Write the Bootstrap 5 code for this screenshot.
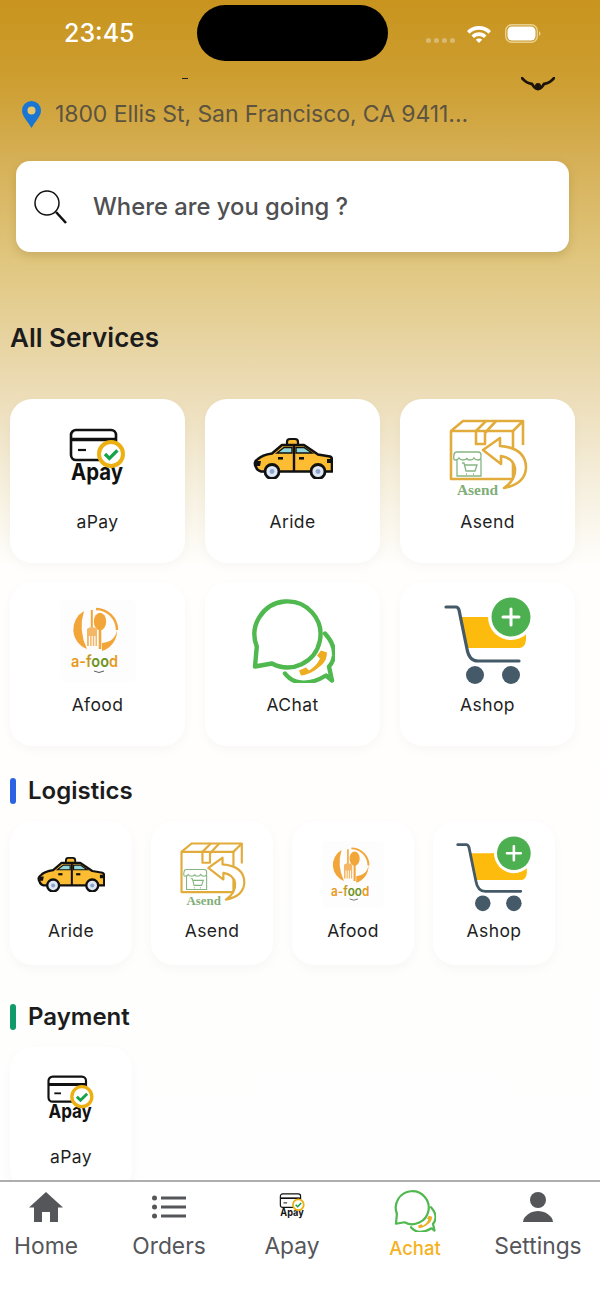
<!DOCTYPE html>
<html lang="en">
<head>
    <meta charset="utf-8">
    <meta name="viewport" content="width=device-width, initial-scale=1">
    <title>All Services</title>
    <link href="https://cdn.jsdelivr.net/npm/bootstrap@5.3.3/dist/css/bootstrap.min.css" rel="stylesheet"/>
    <style>
        html, body { height: 100%; overflow: hidden; }
        body { font-family: Inter, "Liberation Sans", sans-serif; background: #fff; }

        .app-shell { height: 1299px; width: 600px; }
        .scroll-top {
            height: 1180px;
            overflow: hidden;
            background: linear-gradient(180deg, #c8941e 0, #cd9e30 80px, #d6b057 160px, #e0c67e 260px, #ecdcb6 390px, #f5eedb 480px, #fffefc 565px, #fefefe 100%);
        }

        .status-row { height: 76px; padding: 5px 0 0 64px; }
        .status-time { width: 133px; height: 56px; line-height: 57px; color: #fff; font-size: 25px; font-weight: 500; }
        .island { width: 191px; height: 56px; border-radius: 28px; background: #000; }
        .signal-dots { gap: 3px; margin: 33px 12px 0 38px; }
        .signal-dots i { width: 5px; height: 5px; border-radius: 50%; background: #d8ba72; }
        .status-icons { height: 56px; gap: 14px; }

        .peek-row { height: 16px; }
        .peek-dash { width: 6px; height: 1px; background: #222; margin: 2px 0 0 182px; }
        .peek-bell { margin: 1px 45px 0 auto; }

        .address-row { height: 44px; padding: 1px 0 0 22px; gap: 14px; }
        .address-text { color: #5c5340; font-size: 23px; letter-spacing: -.08px; white-space: nowrap; }

        .search-box {
            height: 91px;
            margin: 25px 31px 0 16px;
            padding: 1px 0 0 17px;
            gap: 25px;
            border-radius: 14px;
            box-shadow: 0 4px 10px rgba(120, 90, 20, .22);
        }
        .search-text { color: #4f5052; font-size: 23.8px; font-weight: 500; }

        .all-title { margin: 69px 0 0 10px; height: 34px; line-height: 34px; color: #1c1c1c; font-size: 26px; font-weight: 600; }
        .big-grid { display: grid; grid-template-columns: repeat(3, 175px); gap: 19px 20px; margin: 44px 0 0 10px; }
        .small-row { gap: 19px; margin: 13px 0 0 10px; }

        .tile { border: 0; border-radius: 22px; background: #fff; box-shadow: 0 4px 12px rgba(0, 0, 0, .03); }
        .tile-big { height: 164px; }
        .tile-small { width: 122px; height: 144px; }
        .tile-art { display: flex; align-items: center; justify-content: center; }
        .tile-big .tile-art { height: 113px; padding-top: 4px; }
        .tile-small .tile-art { height: 100px; padding-top: 6px; }
        .tile-name { height: 20px; line-height: 20px; text-align: center; color: #1f1f1f; font-size: 17.5px; letter-spacing: .4px; }

        .group-head { height: 34px; gap: 12px; margin-left: 10px; }
        .group-bar { width: 6px; height: 26px; border-radius: 3px; }
        .bar-blue { background: #2b63e3; }
        .bar-green { background: #119a6b; }
        .group-title { color: #1c1c1c; font-size: 24px; font-weight: 560; }
        .head-logistics { margin-top: 28px; }
        .head-payment { margin-top: 35px; }

        .tab-strip {
            display: grid;
            grid-template-columns: repeat(5, 123px);
            width: 615px;
            margin-left: -15.5px;
            height: 119px;
            border-top: 2px solid #aeaeae;
            background: #fff;
        }
        .tab-cell { display: flex; flex-direction: column; align-items: center; }
        .tab-art { height: 49px; display: flex; align-items: center; justify-content: center; }
        .tab-art-low { padding-top: 8px; }
        .tab-label { color: #55565a; font-size: 22.8px; line-height: 28px; margin-top: 1px; white-space: nowrap; }
        .tab-active { color: #f5b21f; font-size: 18.5px; font-weight: 500; margin-top: 3px; }
    </style>
</head>
<body>

<svg width="0" height="0" class="d-block position-absolute">
    <defs>
        <symbol id="ic-apay" viewBox="0 0 60 60">
            <rect x="3" y="2" width="45" height="30" rx="5" fill="#fff" stroke="#111" stroke-width="2.6"/>
            <path d="M3 11.5H48" stroke="#111" stroke-width="3.6"/>
            <path d="M10 22H18" stroke="#111" stroke-width="2.2"/>
            <text x="3" y="52" font-family="Inter, sans-serif" font-size="23" font-weight="700" fill="#111" textLength="52" lengthAdjust="spacingAndGlyphs">Apay</text>
            <circle cx="43" cy="26" r="12" fill="#fff" stroke="#edb013" stroke-width="4"/>
            <path d="M37 26l4.4 4.4 8-8" fill="none" stroke="#17a34a" stroke-width="3.4"/>
        </symbol>

        <symbol id="ic-taxi" viewBox="0 -2 80 42">
            <path d="M34 7V3q0-3 3-3h5q3 0 3 3v4z" fill="#fdbd33" stroke="#111" stroke-width="2.2"/>
            <path d="M3 28q-3-5 2-8 4-4 14-5.500L29 6h22l14 9.500 12 2q2 1 2 3v12H8q-4-1-5-4.500z" fill="#fdbd33" stroke="#111" stroke-width="2.600" stroke-linejoin="round"/>
            <path d="M24 14L31 8.500h8V14zM43 8.500h8L59 14H43z" fill="#8fd6da" stroke="#111" stroke-width="1.400"/>
            <path d="M41 6V32" stroke="#111" stroke-width="2.400"/>
            <path d="M3 22h5l-1 5H3zM78 20h-4v4h4z" fill="#111"/>
            <rect x="25" y="18" width="5" height="2.600" fill="#111"/>
            <rect x="46" y="18" width="5" height="2.600" fill="#111"/>
            <circle cx="19" cy="32.500" r="7" fill="#dfe7f5" stroke="#111" stroke-width="2.800"/>
            <circle cx="19" cy="32.500" r="2.400" fill="#8fa6cc"/>
            <circle cx="65" cy="32.500" r="7" fill="#dfe7f5" stroke="#111" stroke-width="2.800"/>
            <circle cx="65" cy="32.500" r="2.400" fill="#8fa6cc"/>
        </symbol>

        <symbol id="ic-asend" viewBox="0 0 80 80">
            <g fill="none" stroke="#e2ac3d" stroke-width="2.600" stroke-linejoin="round">
                <path d="M65 30V13H3v48h62V44"/>
                <path d="M3 13L15 3h60L65 13M75 3v24"/>
                <path d="M38 3L28 13v13h9V15L48 3"/>
                <path d="M35 32L52 20V28Q78 30 78 50 77 66 56 70 68 62 67 50 65 40 53 38V46z" fill="#fff"/>
            </g>
            <g fill="none" stroke="#86b583" stroke-width="1.300">
                <path d="M9 41v17h24V41"/>
                <path d="M6 37q0-3 3-3h21q3 0 3 3v2q0 3-3 3-3 0-4-2-1 2-4 2t-3-2q-1 2-4 2t-4-2q-1 2-4 2-2 0-1-5z"/>
                <path d="M14 45h2l2 8h9l2-6H17M18 56h1M25 56h1"/>
            </g>
            <text x="9" y="77" font-family="Liberation Serif, serif" font-size="15.500" font-weight="700" fill="#7fae78" textLength="41" lengthAdjust="spacingAndGlyphs">Asend</text>
        </symbol>

        <symbol id="ic-afood" viewBox="0 0 76 82">
            <rect width="76" height="82" rx="6" fill="#fdfdfd"/>
            <path d="M24 11A21 21 0 0 0 27 49Q18 30 24 11z" fill="#f2a63a"/>
            <path d="M36 9A21 21 0 0 1 57 30" fill="none" stroke="#f2a63a" stroke-width="2.400"/>
            <path d="M42 51A21 21 0 0 0 57 30Q55 42 42 43z" fill="#f2a63a"/>
            <ellipse cx="40" cy="21.500" rx="6.200" ry="8.800" fill="#f2a63a"/>
            <path d="M40 28V49" stroke="#f2a63a" stroke-width="2.600"/>
            <path d="M31.800 10V28" stroke="#f2a63a" stroke-width="2"/>
            <path d="M27 29q5-4 10 0v17h-1.500V36h-1.200v10h-1.500V36h-1.200v10h-1.500V36h-1.200v10H27z" fill="#f4b766"/>
            <text x="11" y="67" font-family="Inter, sans-serif" font-size="16" font-weight="600" textLength="47" lengthAdjust="spacingAndGlyphs"><tspan fill="#e89a22">a-</tspan><tspan fill="#c49a1e">f</tspan><tspan fill="#6d9424">oo</tspan><tspan fill="#e89a22">d</tspan></text>
            <path d="M34 71q5 3 10 0" fill="none" stroke="#333" stroke-width=".8"/>
        </symbol>

        <symbol id="ic-achat" viewBox="0 -1.500 84 84">
            <g fill="none" stroke="#4fb84f" stroke-width="4.400" stroke-linejoin="round" stroke-linecap="round">
                <path d="M5.800 46L4 66 21 63A33 33 0 1 0 5.800 46z"/>
                <path d="M74 33Q84 44 83 55 82 62 78 66L81 80 75 75Q62 83 50 82 40 81 34 73"/>
            </g>
            <path d="M70 50L76 52Q76 60 70 65 60 74 50 75L48 70 55 67 58 70Q66 65 69 58L66 55z" fill="#eeac20"/>
        </symbol>

        <symbol id="ic-cart" viewBox="0 0 88 90">
            <path d="M15 21H50V52H22z" fill="#fdbc0d"/>
            <path d="M40 21h20L82 36v8q-1 8-7 8H40z" fill="#fdbc0d"/>
            <path d="M2 11H12q2 0 3 3L23 53q2 12 11 12H75" fill="none" stroke="#455a68" stroke-width="3.200" stroke-linecap="round"/>
            <circle cx="31" cy="79" r="9" fill="#455a68"/>
            <circle cx="67" cy="79" r="9" fill="#455a68"/>
            <circle cx="67" cy="21" r="23" fill="#fff"/>
            <circle cx="67" cy="21" r="19.500" fill="#4caf50"/>
            <path d="M67 13V29M59 21H75" stroke="#fff" stroke-width="3" stroke-linecap="round"/>
        </symbol>
    </defs>
</svg>

<div class="app-shell d-flex flex-column">
    <div class="scroll-top">
        <div class="status-row d-flex align-items-start">
            <div class="status-time">23:45</div>
            <div class="island"></div>
            <div class="signal-dots d-flex"><i></i><i></i><i></i><i></i></div>
            <div class="status-icons d-flex align-items-center">
                <svg width="24" height="19" viewBox="0 0 24 19"><path d="M0 7a17 17 0 0 1 24 0l-2.500 2.700a13.500 13.500 0 0 0-19 0zM4.500 11.500a10.500 10.500 0 0 1 15 0l-2.500 2.600a7 7 0 0 0-10 0zM8.800 15.800a4.500 4.500 0 0 1 6.400 0L12 19z" fill="#fff"/></svg>
                <svg width="36" height="19" viewBox="0 0 36 19"><rect x=".7" y=".7" width="31.600" height="17.600" rx="6" fill="none" stroke="#e8d190" stroke-width="1.400"/><rect x="2.500" y="2.500" width="28" height="14" rx="4.500" fill="#fff"/><path d="M34 7q1.500 1 1.500 2.500T34 12z" fill="#e8d190"/></svg>
            </div>
        </div>

        <div class="peek-row d-flex align-items-start">
            <div class="peek-dash"></div>
            <svg class="peek-bell" width="34" height="15" viewBox="0 0 34 15"><path d="M1 1q4 5 10 6 3 5 6 5t6-5q6-1 10-6" fill="none" stroke="#1c1408" stroke-width="2.800" stroke-linecap="round"/><circle cx="17" cy="9" r="3" fill="#1c1408"/></svg>
        </div>

        <div class="address-row d-flex align-items-center">
            <svg width="19" height="27" viewBox="0 0 19 27"><path d="M9.500 0a9.500 9.500 0 0 1 9.500 9.500c0 6-6 11-9.500 17.500C6 20.500 0 15.500 0 9.500A9.500 9.500 0 0 1 9.500 0z" fill="#1976d2"/><circle cx="9.500" cy="9.500" r="4" fill="#e7c56c"/></svg>
            <span class="address-text">1800 Ellis St, San Francisco, CA 9411...</span>
        </div>

        <div class="search-box bg-white d-flex align-items-center">
            <svg width="35" height="35" viewBox="0 0 35 35"><circle cx="14" cy="13" r="12" fill="none" stroke="#111" stroke-width="1.500"/><path d="M23 22L33 33" stroke="#111" stroke-width="2.600"/></svg>
            <span class="search-text">Where are you going ?</span>
        </div>

        <h2 class="all-title">All Services</h2>

        <div class="big-grid">
            <div class="card tile tile-big"><div class="tile-art"><svg width="60" height="60"><use href="#ic-apay"/></svg></div><div class="tile-name">aPay</div></div>
            <div class="card tile tile-big"><div class="tile-art"><svg width="80" height="42"><use href="#ic-taxi"/></svg></div><div class="tile-name">Aride</div></div>
            <div class="card tile tile-big"><div class="tile-art"><svg width="80" height="80"><use href="#ic-asend"/></svg></div><div class="tile-name">Asend</div></div>
            <div class="card tile tile-big"><div class="tile-art"><svg width="76" height="82"><use href="#ic-afood"/></svg></div><div class="tile-name">Afood</div></div>
            <div class="card tile tile-big"><div class="tile-art"><svg width="84" height="84"><use href="#ic-achat"/></svg></div><div class="tile-name">AChat</div></div>
            <div class="card tile tile-big"><div class="tile-art"><svg width="88" height="90"><use href="#ic-cart"/></svg></div><div class="tile-name">Ashop</div></div>
        </div>

        <div class="group-head head-logistics d-flex align-items-center">
            <span class="group-bar bar-blue"></span>
            <span class="group-title">Logistics</span>
        </div>
        <div class="small-row d-flex">
            <div class="card tile tile-small"><div class="tile-art"><svg width="68" height="36"><use href="#ic-taxi"/></svg></div><div class="tile-name">Aride</div></div>
            <div class="card tile tile-small"><div class="tile-art"><svg width="67" height="67"><use href="#ic-asend"/></svg></div><div class="tile-name">Asend</div></div>
            <div class="card tile tile-small"><div class="tile-art"><svg width="62" height="67"><use href="#ic-afood"/></svg></div><div class="tile-name">Afood</div></div>
            <div class="card tile tile-small"><div class="tile-art"><svg width="76" height="78"><use href="#ic-cart"/></svg></div><div class="tile-name">Ashop</div></div>
        </div>

        <div class="group-head head-payment d-flex align-items-center">
            <span class="group-bar bar-green"></span>
            <span class="group-title">Payment</span>
        </div>
        <div class="small-row d-flex">
            <div class="card tile tile-small"><div class="tile-art"><svg width="50" height="50"><use href="#ic-apay"/></svg></div><div class="tile-name">aPay</div></div>
        </div>
    </div>

    <nav class="tab-strip">
        <div class="tab-cell">
            <div class="tab-art"><svg width="34" height="30" viewBox="0 0 34 30"><path d="M17 0L34 15.500h-5V30h-8V20h-8v10H5V15.500H0z" fill="#55565a"/></svg></div>
            <div class="tab-label">Home</div>
        </div>
        <div class="tab-cell">
            <div class="tab-art"><svg width="34" height="24" viewBox="0 0 34 24"><g fill="#55565a"><circle cx="2.500" cy="3" r="2.500"/><circle cx="2.500" cy="12" r="2.500"/><circle cx="2.500" cy="21" r="2.500"/><rect x="9" y="1.500" width="25" height="3"/><rect x="9" y="10.500" width="25" height="3"/><rect x="9" y="19.500" width="25" height="3"/></g></svg></div>
            <div class="tab-label">Orders</div>
        </div>
        <div class="tab-cell">
            <div class="tab-art"><svg width="27" height="27"><use href="#ic-apay"/></svg></div>
            <div class="tab-label">Apay</div>
        </div>
        <div class="tab-cell">
            <div class="tab-art tab-art-low"><svg width="42" height="42"><use href="#ic-achat"/></svg></div>
            <div class="tab-label tab-active">Achat</div>
        </div>
        <div class="tab-cell">
            <div class="tab-art"><svg width="30" height="30" viewBox="0 0 30 30"><circle cx="15" cy="8" r="8" fill="#55565a"/><path d="M0 30q0-3 2-5 5-6 13-6t13 6q2 2 2 5z" fill="#55565a"/></svg></div>
            <div class="tab-label">Settings</div>
        </div>
    </nav>
</div>

<script src="https://cdn.jsdelivr.net/npm/bootstrap@5.3.3/dist/js/bootstrap.bundle.min.js"></script>
</body>
</html>
